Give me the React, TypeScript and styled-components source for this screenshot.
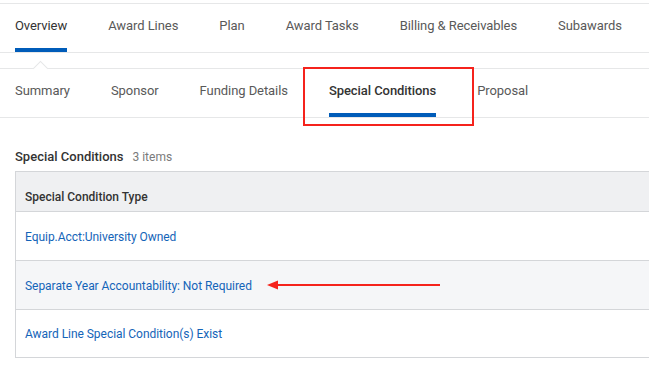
import React from "react";
import styled, { createGlobalStyle } from "styled-components";

const Global = createGlobalStyle`
  html, body { margin: 0; padding: 0; background: #fff; }
  body { font-family: Roboto, "Liberation Sans", Arial, sans-serif; overflow: hidden; }
  #root { width: 649px; height: 371px; overflow: hidden; position: relative; }
`;

const Page = styled.div`
  position: relative;
  width: 649px;
  height: 371px;
  overflow: hidden;
`;

const TabBar = styled.div<{ $notch?: boolean }>`
  position: relative;
  display: flex;
  gap: 41px;
  padding-left: 15px;
  border-top: 1px solid #e6e7e8;
  border-bottom: 1px solid #e6e7e8;
  margin-top: ${(p) => (p.$notch ? "15px" : "3px")};
  ${(p) =>
    p.$notch &&
    `
    &::before {
      content: "";
      position: absolute;
      left: 35px;
      top: -6px;
      width: 10px;
      height: 10px;
      background: #fff;
      border-top: 1px solid #e6e7e8;
      border-left: 1px solid #e6e7e8;
      transform: rotate(45deg);
    }
  `}
`;

const Tab = styled.div<{ $active?: boolean; $strong?: boolean }>`
  font-size: 13px;
  letter-spacing: -0.07px;
  line-height: 43px;
  padding-bottom: 1px;
  border-bottom: 4px solid ${(p) => (p.$strong ? "#005cb9" : "transparent")};
  color: ${(p) => (p.$active || p.$strong ? "#333" : "#595959")};
  font-weight: ${(p) => (p.$strong ? 500 : 400)};
  white-space: nowrap;
`;

const TopTab = styled(Tab)`
  border-bottom-color: ${(p) => (p.$active ? "#005cb9" : "transparent")};
`;

const Section = styled.div`
  padding-left: 15px;
  margin-top: 31px;
`;

const TitleRow = styled.div`
  display: flex;
  align-items: baseline;
  gap: 9px;
  line-height: 15px;
  margin-bottom: 6px;
`;

const Title = styled.span`
  font-size: 13px;
  font-weight: 500;
  color: #333;
`;

const Count = styled.span`
  font-size: 12px;
  color: #7a7a7a;
`;

const Table = styled.div`
  width: 700px;
  border: 1px solid #d4d6d9;
  border-right: none;
`;

const HeaderCell = styled.div`
  background: #eff0f2;
  padding: 18px 0 6px 9px;
  line-height: 15px;
  font-size: 12px;
  font-weight: 500;
  color: #333;
  border-bottom: 1px solid #d4d6d9;
`;

const Row = styled.div<{ $shaded?: boolean; $last?: boolean }>`
  height: ${(p) => (p.$last ? "47px" : "48px")};
  line-height: ${(p) => (p.$last ? "46px" : "47px")};
  padding-left: 9px;
  background: ${(p) => (p.$shaded ? "#f5f6f8" : "#fff")};
  border-bottom: ${(p) => (p.$last ? "none" : "1px solid #d4d6d9")};
`;

const Link = styled.span`
  font-size: 12px;
  letter-spacing: -0.04px;
  color: #1464b8;
`;

const Highlight = styled.div`
  position: absolute;
  left: 303px;
  top: 67px;
  width: 167px;
  height: 55px;
  border: 2px solid #f5231c;
`;

const Arrow = styled.svg`
  position: absolute;
  left: 266px;
  top: 279px;
`;

const topTabs = ["Overview", "Award Lines", "Plan", "Award Tasks", "Billing & Receivables", "Subawards"];
const subTabs = ["Summary", "Sponsor", "Funding Details", "Special Conditions", "Proposal"];
const rows = [
  "Equip.Acct:University Owned",
  "Separate Year Accountability: Not Required",
  "Award Line Special Condition(s) Exist",
];

export default function App() {
  return (
    <Page>
      <Global />
      <TabBar>
        {topTabs.map((t, i) => (
          <TopTab key={t} $active={i === 0}>
            {t}
          </TopTab>
        ))}
      </TabBar>
      <TabBar $notch>
        {subTabs.map((t) => (
          <Tab key={t} $strong={t === "Special Conditions"}>
            {t}
          </Tab>
        ))}
      </TabBar>
      <Section>
        <TitleRow>
          <Title>Special Conditions</Title>
          <Count>3 items</Count>
        </TitleRow>
        <Table>
          <HeaderCell>Special Condition Type</HeaderCell>
          {rows.map((r, i) => (
            <Row key={r} $shaded={i === 1} $last={i === rows.length - 1}>
              <Link>{r}</Link>
            </Row>
          ))}
        </Table>
      </Section>
      <Highlight />
      <Arrow width="176" height="12" viewBox="0 0 176 12">
        <line x1="9" y1="6" x2="174" y2="6" stroke="#f5231c" strokeWidth="2" />
        <polygon points="1,6 12,1.5 12,10.5" fill="#f5231c" />
      </Arrow>
    </Page>
  );
}
